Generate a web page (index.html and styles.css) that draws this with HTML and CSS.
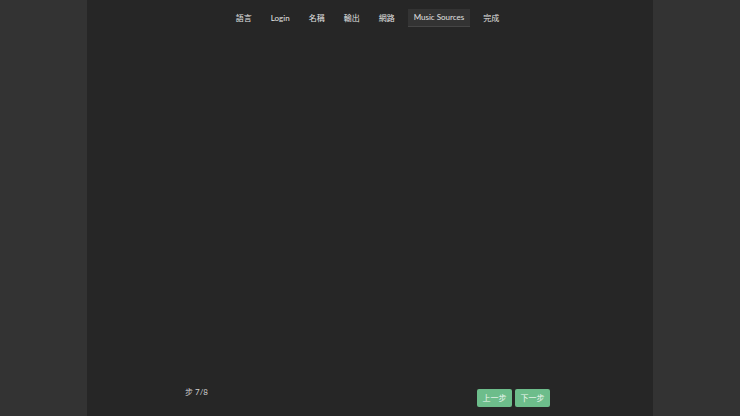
FILE: index.html
```html
<!DOCTYPE html>
<html lang="zh-Hant">
<head>
<meta charset="utf-8">
<title>Setup</title>
<link rel="stylesheet" href="styles.css">
</head>
<body>
<div class="panel">
  <nav class="tabs">
    <span class="tab">語言</span>
    <span class="tab">Login</span>
    <span class="tab">名稱</span>
    <span class="tab">輸出</span>
    <span class="tab">網路</span>
    <span class="tab active">Music Sources</span>
    <span class="tab">完成</span>
  </nav>
  <main class="content"></main>
  <footer class="footer">
    <span class="step">步 7/8</span>
    <div class="buttons">
      <button class="btn">上一步</button>
      <button class="btn">下一步</button>
    </div>
  </footer>
</div>
</body>
</html>
```
FILE: styles.css
```css
html, body {
  margin: 0;
  padding: 0;
  height: 100%;
}
body {
  background: #333333;
  font-family: Lato, "Noto Sans CJK TC", sans-serif;
  font-size: 8px;
  color: #dddddd;
}
.panel {
  width: 566px;
  height: 416px;
  margin: 0 auto;
  background: #262626;
  display: flex;
  flex-direction: column;
  box-sizing: border-box;
}
.tabs {
  display: flex;
  justify-content: center;
  gap: 7px;
  padding-top: 9px;
  padding-right: 5px;
}
.tab {
  height: 18px;
  line-height: 18px;
  padding: 0 6px;
  color: #e2e2e2;
  box-sizing: border-box;
}
.tab.active {
  background: #333333;
  border-bottom: 1px solid #454545;
  line-height: 17px;
}
.content {
  flex: 1;
}
.footer {
  display: flex;
  justify-content: space-between;
  align-items: flex-start;
  padding: 0 103px 9px 98px;
}
.step {
  line-height: 10px;
  margin-top: -2px;
  color: #d0d0d0;
}
.buttons {
  display: flex;
  gap: 3px;
}
.btn {
  width: 35px;
  height: 18px;
  padding: 0;
  border: none;
  border-radius: 2px;
  background: #6dbd8b;
  color: #eef7f1;
  font-family: inherit;
  font-size: 8px;
  line-height: 18px;
}
```
